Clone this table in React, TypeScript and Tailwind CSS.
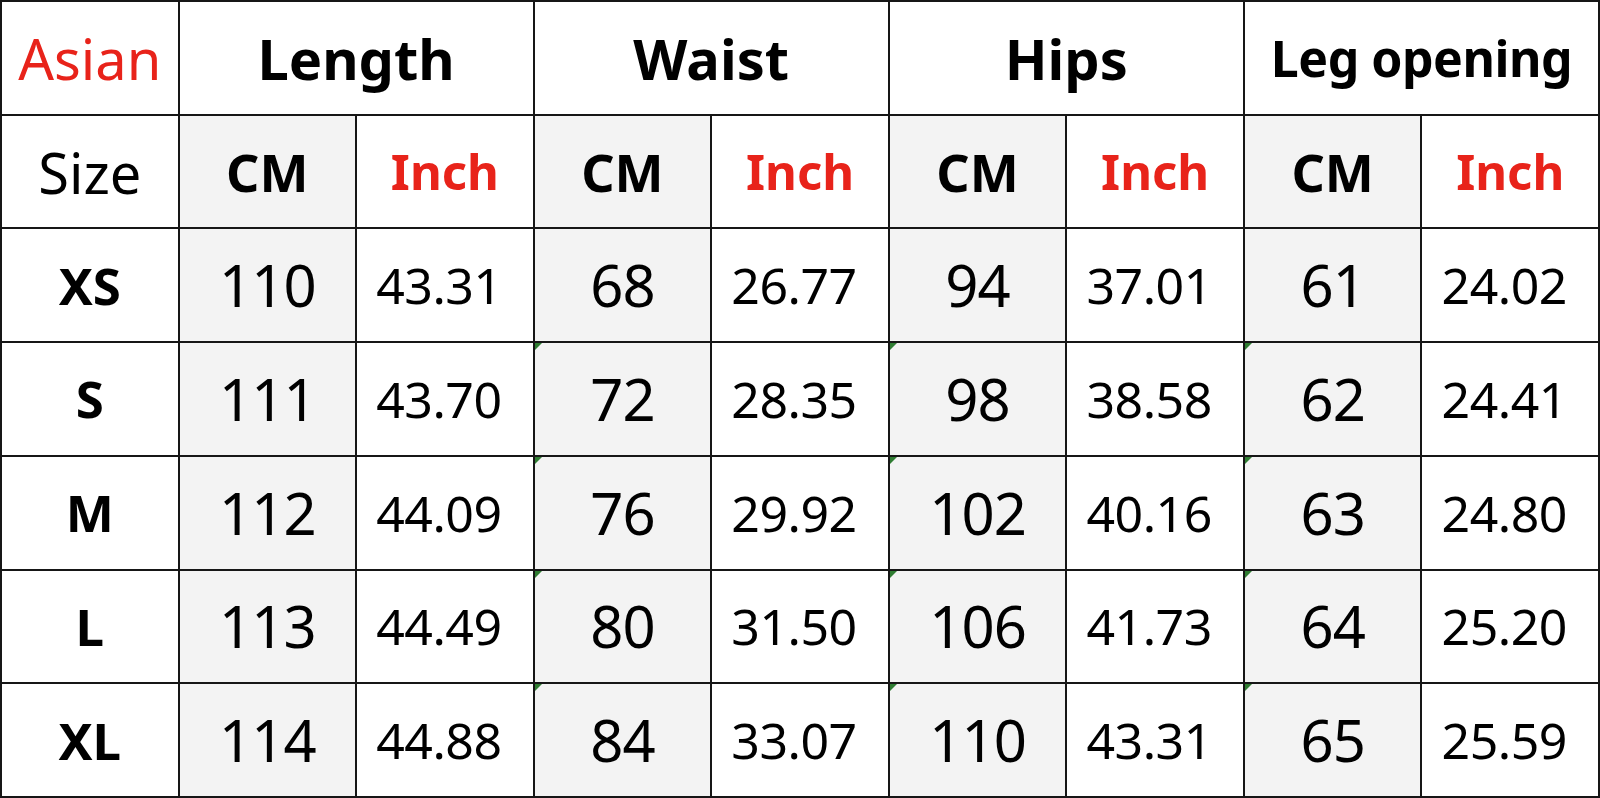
import React from "react";

type Row = {
  size: string;
  values: string[]; // cm, inch pairs: length, waist, hips, leg
};

const rows: Row[] = [
  { size: "XS", values: ["110", "43.31", "68", "26.77", "94", "37.01", "61", "24.02"] },
  { size: "S", values: ["111", "43.70", "72", "28.35", "98", "38.58", "62", "24.41"] },
  { size: "M", values: ["112", "44.09", "76", "29.92", "102", "40.16", "63", "24.80"] },
  { size: "L", values: ["113", "44.49", "80", "31.50", "106", "41.73", "64", "25.20"] },
  { size: "XL", values: ["114", "44.88", "84", "33.07", "110", "43.31", "65", "25.59"] },
];

const groups = ["Length", "Waist", "Hips", "Leg opening"];

const font = { fontFamily: '"Noto Sans", "Open Sans", sans-serif' };

// little green excel error marker in the top left corner
const Marker = () => (
  <span className="absolute top-0 left-0 w-0 h-0 border-t-[7px] border-t-[#2f7d32] border-r-[7px] border-r-transparent" />
);

export default function App() {
  return (
    <div
      className="w-[1600px] h-[798px] bg-[#161616] p-[2px] grid grid-cols-9 grid-rows-7 gap-[2px] overflow-hidden"
      style={font}
    >
      {/* header row */}
      <div className="bg-white flex items-center justify-center text-[56px] leading-none text-[#e8231a]">
        Asian
      </div>
      {groups.map((g) => (
        <div
          key={g}
          className={`col-span-2 bg-white flex items-center justify-center font-bold leading-none text-black ${
            g === "Leg opening" ? "text-[50px] tracking-[-0.5px]" : "text-[56px]"
          }`}
        >
          {g}
        </div>
      ))}

      {/* unit row */}
      <div className="bg-white flex items-center justify-center text-[56px] leading-none text-black">
        Size
      </div>
      {groups.map((g) => (
        <React.Fragment key={g}>
          <div className="bg-[#f3f3f3] flex items-center justify-center font-bold text-[52px] leading-none text-black">
            CM
          </div>
          <div className="bg-white flex items-center justify-center font-bold text-[49px] leading-none text-[#e8231a]">
            Inch
          </div>
        </React.Fragment>
      ))}

      {/* data rows */}
      {rows.map((r, ri) => (
        <React.Fragment key={r.size}>
          <div className="bg-white flex items-center justify-center font-bold text-[51px] leading-none text-black">
            {r.size}
          </div>
          {r.values.map((v, i) => {
            const isCm = i % 2 === 0;
            return (
              <div
                key={i}
                className={`relative flex items-center justify-center leading-none text-black ${
                  isCm ? "bg-[#f3f3f3] text-[58px] tracking-[-1px]" : "bg-white text-[50px] tracking-[-0.5px] pr-3"
                }`}
              >
                {isCm && i > 0 && ri > 0 && <Marker />}
                {v}
              </div>
            );
          })}
        </React.Fragment>
      ))}
    </div>
  );
}
